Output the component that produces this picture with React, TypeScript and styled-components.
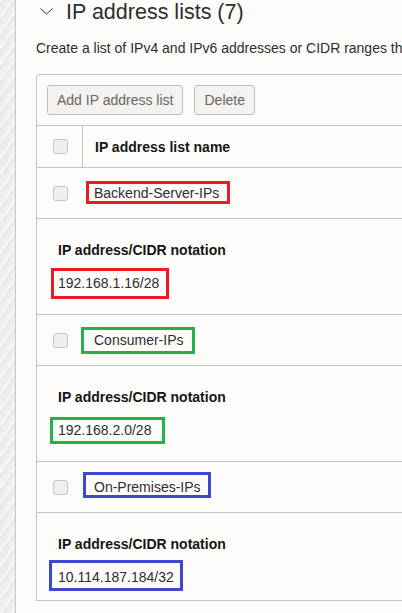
import * as React from "react";
import styled, { createGlobalStyle } from "styled-components";

const GlobalStyle = createGlobalStyle`
    html, body {
        margin: 0;
        padding: 0;
        background: #fcfcfb;
    }
    body {
        font-family: "Liberation Sans", Arial, sans-serif;
        color: #312d2a;
    }
`;

interface Frame {
    color: string;
    top: number;
    right: number;
    bottom: number;
    left: number;
}

interface IpList {
    name: string;
    cidr: string;
    nameFrame: Frame;
    cidrFrame: Frame;
}

const RED = "#ed1c24";
const GREEN = "#22b14c";
const BLUE = "#3f48cc";

const lists: IpList[] = [
    {
        name: "Backend-Server-IPs",
        cidr: "192.168.1.16/28",
        nameFrame: { color: RED, top: -4, right: -11, bottom: -3, left: -8 },
        cidrFrame: { color: RED, top: -7, right: -10, bottom: -8, left: -7 },
    },
    {
        name: "Consumer-IPs",
        cidr: "192.168.2.0/28",
        nameFrame: { color: GREEN, top: -5, right: -12, bottom: -6, left: -13 },
        cidrFrame: { color: GREEN, top: -5, right: -14, bottom: -6, left: -8 },
    },
    {
        name: "On-Premises-IPs",
        cidr: "10.114.187.184/32",
        nameFrame: { color: BLUE, top: -7, right: -10, bottom: -3, left: -11 },
        cidrFrame: { color: BLUE, top: -9, right: -9, bottom: -6, left: -9 },
    },
];

const Chevron = () => (
    <svg width="13" height="7" viewBox="0 0 13 7" fill="none">
        <path d="M0.5 0.5 L6.5 6 L12.5 0.5" stroke="#312d2a" strokeWidth="1" />
    </svg>
);

const Annotated: React.FC<{ frame: Frame; children: React.ReactNode }> = ({
    frame,
    children,
}) => (
    <Mark>
        {children}
        <MarkFrame
            $color={frame.color}
            $top={frame.top}
            $right={frame.right}
            $bottom={frame.bottom}
            $left={frame.left}
        />
    </Mark>
);

const App: React.FC = () => {
    return (
        <>
            <GlobalStyle />
            <Page>
                <SideStrip />
                <Main>
                    <TitleRow>
                        <Chevron />
                        <Title>IP address lists (7)</Title>
                    </TitleRow>
                    <Description>
                        Create a list of IPv4 and IPv6 addresses or CIDR ranges th
                    </Description>
                    <Table>
                        <Toolbar>
                            <Button>Add IP address list</Button>
                            <Button>Delete</Button>
                        </Toolbar>
                        <HeaderRow>
                            <CheckCell $divider>
                                <Checkbox />
                            </CheckCell>
                            <HeaderName>IP address list name</HeaderName>
                        </HeaderRow>
                        {lists.map((item, i) => (
                            <React.Fragment key={item.name}>
                                <Row>
                                    <CheckCell>
                                        <Checkbox />
                                    </CheckCell>
                                    <NameCell>
                                        <Annotated frame={item.nameFrame}>
                                            {item.name}
                                        </Annotated>
                                    </NameCell>
                                </Row>
                                <Detail $last={i === lists.length - 1}>
                                    <DetailLabel>IP address/CIDR notation</DetailLabel>
                                    <DetailValue>
                                        <Annotated frame={item.cidrFrame}>
                                            {item.cidr}
                                        </Annotated>
                                    </DetailValue>
                                </Detail>
                            </React.Fragment>
                        ))}
                    </Table>
                </Main>
            </Page>
        </>
    );
};

const Page = styled.div`
    display: flex;
    width: 402px;
    height: 613px;
    overflow: hidden;
    background: #fcfcfb;
`;

const SideStrip = styled.div`
    flex: 0 0 15px;
    border-right: 1px solid #c9c5c0;
    background-color: #efeeec;
    background-image: repeating-linear-gradient(
        125deg,
        rgba(255, 255, 255, 0.55) 0 2px,
        rgba(225, 223, 220, 0.35) 2px 5px,
        transparent 5px 9px
    );
`;

const Main = styled.div`
    flex: 1;
    min-width: 0;
    padding-left: 20px;
    display: flex;
    flex-direction: column;
`;

const TitleRow = styled.div`
    display: flex;
    align-items: center;
    height: 24px;
    padding-left: 4px;
    gap: 13px;
    svg {
        margin-top: -1px;
    }
`;

const Title = styled.h2`
    margin: 0;
    font-size: 21.5px;
    line-height: 24px;
    font-weight: 400;
    color: #312d2a;
    white-space: nowrap;
`;

const Description = styled.p`
    margin: 16px 0 18px 0;
    font-size: 14px;
    line-height: 16px;
    white-space: nowrap;
    color: #312d2a;
`;

const Table = styled.div`
    width: 700px;
    border-top: 1px solid #c6c2bd;
    border-left: 1px solid #c6c2bd;
    border-top-left-radius: 4px;
`;

const Toolbar = styled.div`
    display: flex;
    gap: 11px;
    padding: 10px;
    border-bottom: 1px solid #c6c2bd;
`;

const Button = styled.button`
    height: 30px;
    padding: 0 9px;
    border: 1px solid #c2bdb7;
    border-radius: 3px;
    background: #f3f2f0;
    color: #6b6661;
    font-family: "Liberation Sans", Arial, sans-serif;
    font-size: 14px;
`;

const HeaderRow = styled.div`
    display: flex;
    height: 41px;
    border-bottom: 1px solid #c6c2bd;
`;

const Row = styled.div`
    display: flex;
    height: 50px;
    border-bottom: 1px solid #c6c2bd;
`;

const CheckCell = styled.div<{ $divider?: boolean }>`
    flex: 0 0 46px;
    display: flex;
    align-items: center;
    justify-content: center;
    border-right: ${(p) => (p.$divider ? "1px solid #c6c2bd" : "1px solid transparent")};
    box-sizing: border-box;
    padding-left: 1px;
`;

const Checkbox = styled.span`
    width: 15px;
    height: 15px;
    box-sizing: border-box;
    border: 1px solid #c9c5c0;
    border-radius: 3px;
    background: #f0efed;
`;

const HeaderName = styled.div`
    display: flex;
    align-items: center;
    padding-left: 12px;
    font-size: 14px;
    font-weight: 700;
    color: #161513;
`;

const NameCell = styled.div`
    display: flex;
    align-items: center;
    padding-left: 11px;
    font-size: 14px;
    color: #312d2a;
`;

const Mark = styled.span`
    position: relative;
    display: inline-block;
    line-height: 16px;
`;

const MarkFrame = styled.span<{
    $color: string;
    $top: number;
    $right: number;
    $bottom: number;
    $left: number;
}>`
    position: absolute;
    top: ${(p) => p.$top}px;
    right: ${(p) => p.$right}px;
    bottom: ${(p) => p.$bottom}px;
    left: ${(p) => p.$left}px;
    border: 3px solid ${(p) => p.$color};
    pointer-events: none;
`;

const Detail = styled.div<{ $last?: boolean }>`
    display: flex;
    flex-direction: column;
    height: ${(p) => (p.$last ? 88 : 96)}px;
    padding: 23px 0 0 21px;
    box-sizing: border-box;
    border-bottom: 1px solid #c6c2bd;
`;

const DetailLabel = styled.div`
    font-size: 14px;
    line-height: 16px;
    font-weight: 700;
    color: #161513;
`;

const DetailValue = styled.div`
    margin-top: 17px;
    font-size: 14px;
    color: #312d2a;
`;

export default App;
